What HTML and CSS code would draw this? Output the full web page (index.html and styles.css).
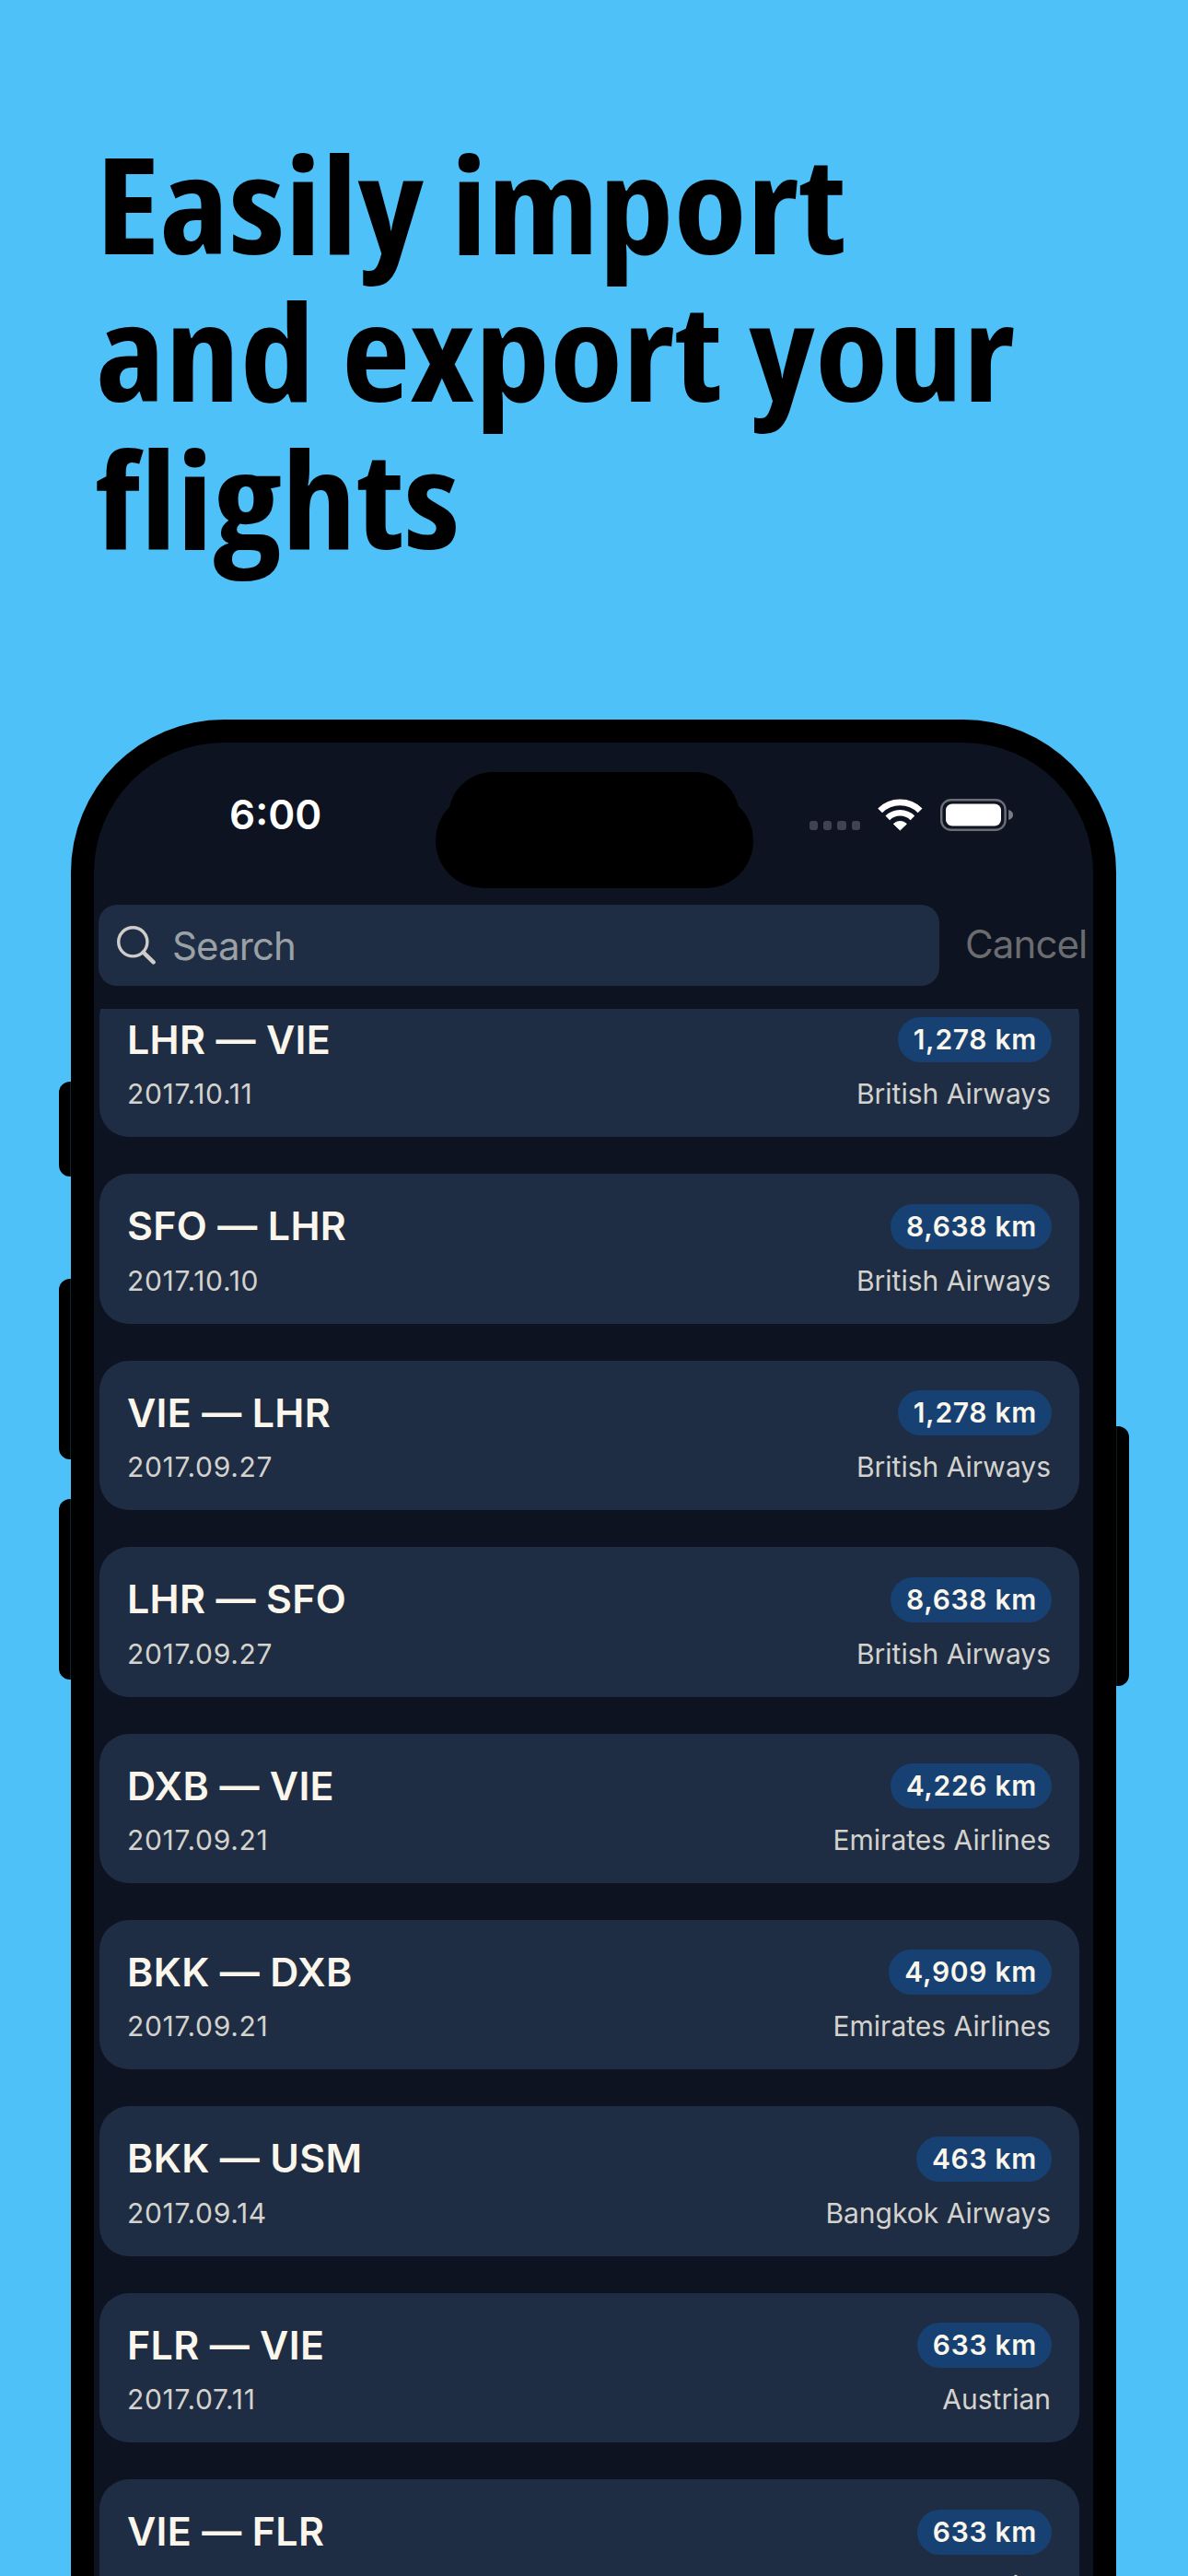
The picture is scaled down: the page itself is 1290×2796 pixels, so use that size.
FILE: index.html
```html
<!DOCTYPE html>
<html lang="en">

<head>
    <meta charset="UTF-8" />
    <meta name="viewport" content="width=device-width, initial-scale=1.0" />
    <title>Easily import and export your flights</title>
    <link rel="stylesheet" href="styles.css">
</head>

<body>
    <h1 class="headline">
        <span>Easily import</span>
        <span>and export your</span>
        <span>flights</span>
    </h1>

    <div class="device">
        <!-- left buttons -->
        <div class="side left">
            <i class="btn-action"></i>
            <i class="btn-volume"></i>
            <i class="btn-volume"></i>
        </div>

        <div class="phone">
            <div class="screen">
                <div class="island-top"></div>
                <div class="island"></div>

                <!-- status bar -->
                <div class="status">
                    <span class="time">6:00</span>
                    <div class="status-icons">
                        <div class="dots"><i></i><i></i><i></i><i></i></div>
                        <svg class="wifi" width="49" height="35" viewBox="0 0 49 35">
                            <path d="M2.6 12.8A31 31 0 0 1 46.1 12.8" fill="none" stroke="#fff" stroke-width="6.8" />
                            <path d="M10.8 20.9A19.2 19.2 0 0 1 37.9 20.9" fill="none" stroke="#fff" stroke-width="6.6" />
                            <path d="M24.35 34L17.3 27.3A10.2 10.2 0 0 1 31.4 27.3Z" fill="#fff" stroke="#fff" stroke-width="1" stroke-linejoin="round" />
                        </svg>
                        <svg class="battery" width="79" height="35" viewBox="0 0 79 35">
                            <rect x="1.2" y="1.2" width="69.4" height="32.6" rx="10.5" fill="none" stroke="#6b6e76" stroke-width="2.4" />
                            <rect x="6" y="5.5" width="60" height="24" rx="7" fill="#fff" />
                            <path d="M74.2 12C77.6 13 79 15 79 17.5S77.6 22 74.2 23Z" fill="#7a7d84" />
                        </svg>
                    </div>
                </div>

                <!-- search -->
                <div class="search">
                    <div class="search-box">
                        <svg width="42" height="42" viewBox="0 0 42 42" fill="none" stroke="#cfcdc9">
                            <circle cx="17.3" cy="17.3" r="15.6" stroke-width="3.4" />
                            <path d="M28.6 28.6L39.6 39.4" stroke-width="4.4" stroke-linecap="round" />
                        </svg>
                        <span>Search</span>
                    </div>
                    <span class="cancel">Cancel</span>
                </div>

                <!-- flights -->
                <div class="list">
                    <ul>
                        <li>
                            <div class="row"><b>LHR — VIE</b><span class="km">1,278 km</span></div>
                            <div class="row info"><span class="date">2017.10.11</span><span>British Airways</span></div>
                        </li>
                        <li>
                            <div class="row"><b>SFO — LHR</b><span class="km">8,638 km</span></div>
                            <div class="row info"><span class="date">2017.10.10</span><span>British Airways</span></div>
                        </li>
                        <li>
                            <div class="row"><b>VIE — LHR</b><span class="km">1,278 km</span></div>
                            <div class="row info"><span class="date">2017.09.27</span><span>British Airways</span></div>
                        </li>
                        <li>
                            <div class="row"><b>LHR — SFO</b><span class="km">8,638 km</span></div>
                            <div class="row info"><span class="date">2017.09.27</span><span>British Airways</span></div>
                        </li>
                        <li>
                            <div class="row"><b>DXB — VIE</b><span class="km">4,226 km</span></div>
                            <div class="row info"><span class="date">2017.09.21</span><span>Emirates Airlines</span></div>
                        </li>
                        <li>
                            <div class="row"><b>BKK — DXB</b><span class="km">4,909 km</span></div>
                            <div class="row info"><span class="date">2017.09.21</span><span>Emirates Airlines</span></div>
                        </li>
                        <li>
                            <div class="row"><b>BKK — USM</b><span class="km">463 km</span></div>
                            <div class="row info"><span class="date">2017.09.14</span><span>Bangkok Airways</span></div>
                        </li>
                        <li>
                            <div class="row"><b>FLR — VIE</b><span class="km">633 km</span></div>
                            <div class="row info"><span class="date">2017.07.11</span><span>Austrian</span></div>
                        </li>
                        <li>
                            <div class="row"><b>VIE — FLR</b><span class="km">633 km</span></div>
                            <div class="row info"><span class="date">2017.07.09</span><span>Austrian</span></div>
                        </li>
                    </ul>
                </div>
            </div>
        </div>

        <!-- right button -->
        <div class="side right">
            <i class="btn-power"></i>
        </div>
    </div>
</body>

</html>
```
FILE: styles.css
```css
* {
    margin: 0;
    padding: 0;
    box-sizing: border-box;
}

li {
    list-style: none;
}

body {
    display: flex;
    flex-direction: column;
    width: 1290px;
    height: 2796px;
    overflow: hidden;
    background-color: #4fc1f9;
    font-family: Inter, "Liberation Sans", sans-serif;
}

.headline {
    display: flex;
    flex: none;
    flex-direction: column;
    align-items: flex-start;
    height: 781px;
    padding: 140px 0 0 104px;
    font-family: "Open Sans", sans-serif;
    font-size: 146px;
    font-weight: 700;
    font-stretch: 75%;
    line-height: 160px;
    color: #000;
}

/* a little wider than the condensed cut */
.headline span {
    white-space: nowrap;
    transform: scaleX(1.112);
    transform-origin: left;
}

.device {
    display: flex;
    flex: 1;
    min-height: 0;
    padding-left: 64px;
}

/* hardware buttons */
.side {
    width: 13px;
}

.side i {
    display: block;
    background-color: #000;
}

.left i {
    border-right: 1px solid #0c2530;
    border-radius: 12px 0 0 12px;
}

.right {
    width: 14px;
}

.right i {
    border-left: 1px solid #0c1a22;
    border-radius: 0 12px 12px 0;
}

.btn-action {
    height: 103px;
    margin-top: 393px;
}

.btn-volume {
    height: 196px;
    margin-top: 43px;
}

.btn-action + .btn-volume {
    margin-top: 111px;
}

.btn-power {
    height: 282px;
    margin-top: 767px;
}

.phone {
    width: 1135px;
    padding: 25px 25px 0;
    border-radius: 166px 166px 0 0;
    background-color: #000;
}

.screen {
    position: relative;
    display: flex;
    flex-direction: column;
    height: 100%;
    border-radius: 141px 141px 0 0;
    background-color: #0d1320;
}

/* dynamic island */
.island-top {
    position: absolute;
    top: 32px;
    left: 385px;
    width: 316px;
    height: 96px;
    border-radius: 48px;
    background-color: #000;
}

.island {
    position: absolute;
    top: 55px;
    left: 370.5px;
    width: 345.5px;
    height: 103px;
    border-radius: 52px;
    background-color: #000;
}

.status {
    display: flex;
    justify-content: space-between;
    align-items: flex-start;
    height: 176px;
    padding: 53px 87px 0 147px;
}

.time {
    font-size: 44px;
    font-weight: 600;
    line-height: 50px;
    color: #fff;
}

.status-icons {
    display: flex;
    align-items: center;
    height: 50px;
}

.dots {
    display: flex;
    gap: 6px;
    margin: 24px 19px 0 0;
}

.dots i {
    width: 9.3px;
    height: 9.3px;
    border-radius: 3px;
    background-color: #40444e;
}

.wifi {
    margin-right: 19px;
}

.search {
    display: flex;
    align-items: center;
    height: 88px;
    padding-left: 5px;
    font-size: 42px;
}

.search-box {
    display: flex;
    align-items: center;
    gap: 18px;
    width: 913px;
    height: 88px;
    padding-left: 20px;
    border-radius: 20px;
    background-color: #1e2d44;
    letter-spacing: -0.9px;
    color: #9ba0a5;
}

.cancel {
    margin: -4px 0 0 28px;
    letter-spacing: -0.9px;
    color: #6b6c70;
}

.list {
    flex: 1;
    min-height: 0;
    margin-top: 25px;
    padding: 0 15px 0 5.5px;
    overflow: hidden;
}

/* the first card is scrolled under the search bar */
.list ul {
    margin-top: -23px;
}

.list li {
    height: 162.4px;
    margin-bottom: 40px;
    padding: 30px 30px 0 30.5px;
    border-radius: 32px;
    background-color: #1e2d44;
}

.row {
    display: flex;
    justify-content: space-between;
    align-items: flex-start;
}

.row b {
    font-size: 43px;
    font-weight: 600;
    line-height: 52px;
    letter-spacing: 0.3px;
    color: #faf6ec;
}

.km {
    height: 49px;
    margin-top: 2.4px;
    padding: 0 16px 0 17px;
    border-radius: 25px;
    background-color: #164172;
    font-size: 30px;
    font-weight: 600;
    line-height: 49px;
    letter-spacing: 0.7px;
    color: #faf6ec;
}

.info {
    margin-top: 15.4px;
    padding-right: 1px;
    font-size: 30px;
    line-height: 36px;
    color: #d4d2cd;
}

.date {
    letter-spacing: 0.7px;
}
```
